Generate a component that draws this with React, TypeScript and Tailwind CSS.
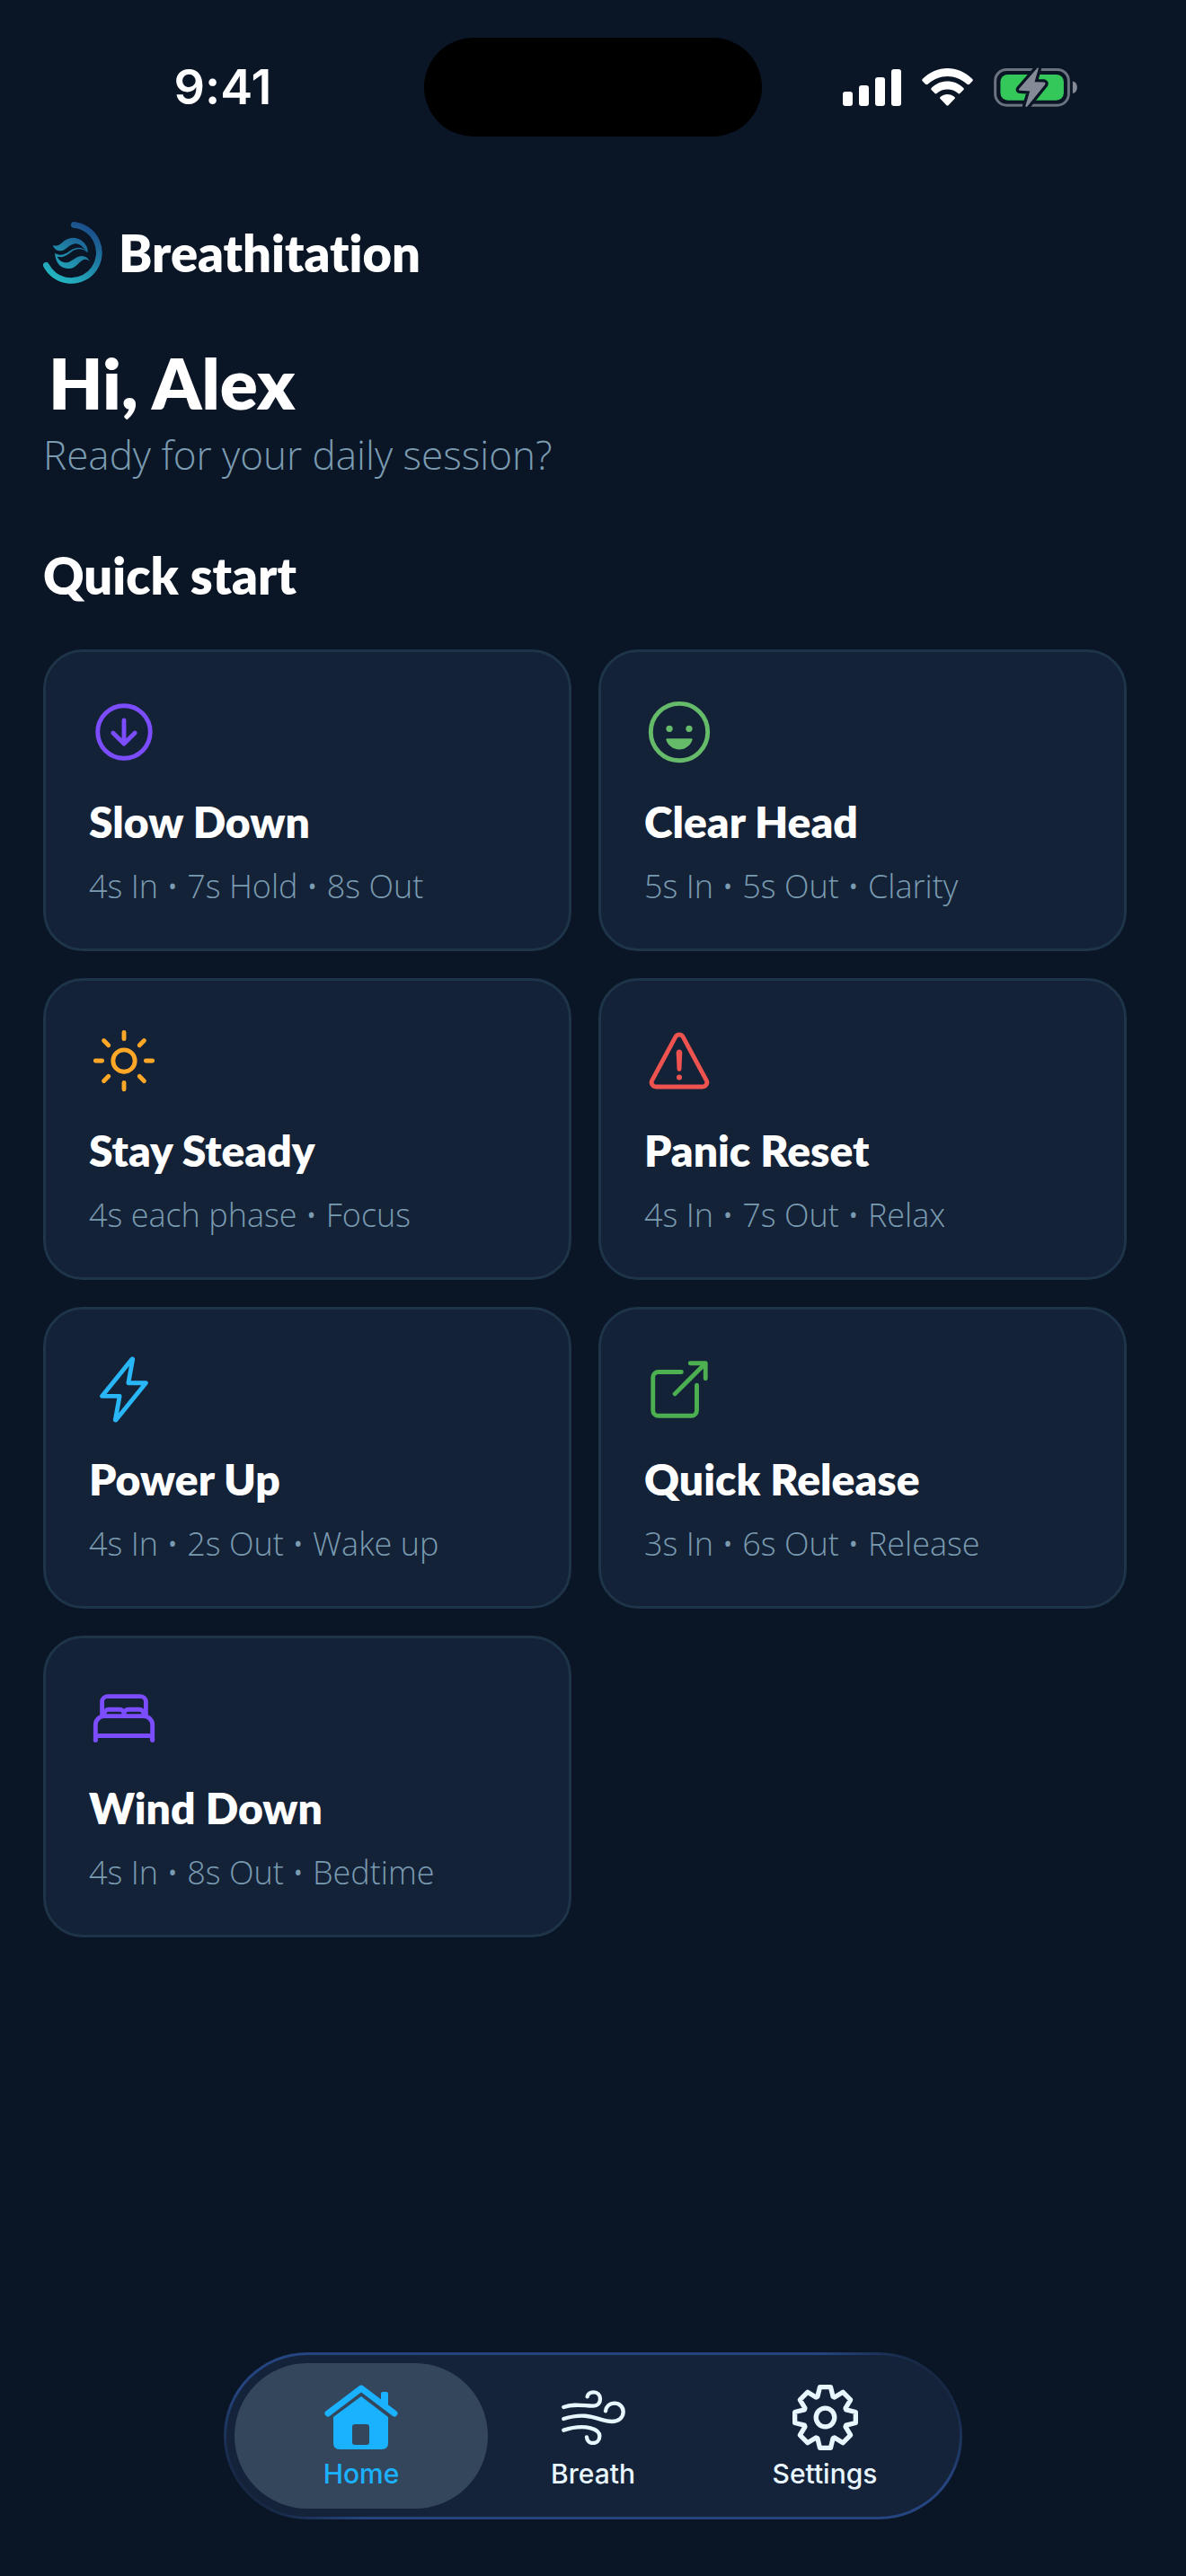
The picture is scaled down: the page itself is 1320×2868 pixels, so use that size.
import { useState } from 'react';
import type { IconType } from 'react-icons';
import {
  IoArrowDownCircleOutline,
  IoBedOutline,
  IoFlashOutline,
  IoHappyOutline,
  IoOpenOutline,
  IoSunnyOutline,
  IoWarningOutline,
} from 'react-icons/io5';

type Preset = { name: string; detail: string; icon: IconType; color: string };

const presets: Preset[] = [
  { name: 'Slow Down', detail: '4s In • 7s Hold • 8s Out', icon: IoArrowDownCircleOutline, color: 'text-[#7c4dff]' },
  { name: 'Clear Head', detail: '5s In • 5s Out • Clarity', icon: IoHappyOutline, color: 'text-[#66bb6a]' },
  { name: 'Stay Steady', detail: '4s each phase • Focus', icon: IoSunnyOutline, color: 'text-[#ffa726]' },
  { name: 'Panic Reset', detail: '4s In • 7s Out • Relax', icon: IoWarningOutline, color: 'text-[#ef5350]' },
  { name: 'Power Up', detail: '4s In • 2s Out • Wake up', icon: IoFlashOutline, color: 'text-[#29b6f6]' },
  { name: 'Quick Release', detail: '3s In • 6s Out • Release', icon: IoOpenOutline, color: 'text-[#4caf50]' },
  { name: 'Wind Down', detail: '4s In • 8s Out • Bedtime', icon: IoBedOutline, color: 'text-[#7c4dff]' },
];

function SignalIcon() {
  return (
    <svg viewBox="0 0 195 123" className="h-[41px] w-[65px]" fill="#fff" aria-hidden="true">
      <rect x="0" y="75" width="33" height="48" rx="9" />
      <rect x="54" y="54" width="33" height="69" rx="9" />
      <rect x="108" y="27" width="33" height="96" rx="9" />
      <rect x="162" y="0" width="33" height="123" rx="9" />
    </svg>
  );
}

function WifiIcon() {
  return (
    <svg viewBox="0 0 172 126" className="h-[42px] w-[57px]" fill="#fff" aria-hidden="true">
      <path d="M2 36C50-12 122-12 170 36Q173 40 170 43L160 53Q156 56 152 53C114 18 58 18 20 53Q16 56 12 53L2 43Q-1 40 2 36Z" />
      <path d="M32 66C62 36 110 36 140 66Q143 69 140 72L128 84Q125 87 122 84C102 66 70 66 50 84Q47 87 44 84L32 72Q29 69 32 66Z" />
      <path d="M62 96C76 84 96 84 110 96Q113 99 110 102L89 124Q86 127 83 124L62 102Q59 99 62 96Z" />
    </svg>
  );
}

function BatteryIcon() {
  const bolt = 'M146 2L85 72Q82 78 88 78L121 80L106 130Q108 136 113 131L172 58Q175 52 169 50L137 49L150 4Q149 -1 146 2Z';
  return (
    <svg viewBox="0 0 280 136" className="h-[45px] w-[93px]" aria-hidden="true">
      <rect x="4.5" y="7.5" width="247" height="120" rx="38" fill="none" stroke="#6c7380" strokeWidth="9" />
      <rect x="22" y="24" width="213" height="87" rx="25" fill="#34c759" />
      <path d="M265 47C275 49 280 57 280 67.500C280 78 275 86 265 88Z" fill="#858b96" />
      <path d={bolt} fill="#0a1526" stroke="#0a1526" strokeWidth="20" strokeLinejoin="round" />
      <path d={bolt} fill="#858b96" />
    </svg>
  );
}

function Logo() {
  return (
    <svg viewBox="0 0 198 207" className="h-[69px] w-[66px]" aria-hidden="true">
      <defs>
        <linearGradient id="logo" gradientUnits="userSpaceOnUse" x1="150" y1="20" x2="50" y2="195">
          <stop offset="0" stopColor="#1b4f8c" />
          <stop offset="1" stopColor="#24b5c1" />
        </linearGradient>
      </defs>
      <path d="M103 10A93.500 93.500 0 1 1 10 145" fill="none" stroke="url(#logo)" strokeWidth="20" strokeLinecap="round" />
      <g fill="url(#logo)">
        <path d="M33 78C52 84 58 74 70 64C88 50 114 50 130 64C145 76 150 90 149 103C138 90 124 71 106 73C84 76 76 97 58 97C46 97 36 90 33 78Z" />
        <path d="M39 104C42 140 60 156 86 156C112 156 118 132 136 126C146 124 152 128 156 132C148 116 134 110 118 116C102 122 92 136 74 136C60 134 52 126 47 116C70 122 84 108 96 99C114 86 132 88 149 103C134 82 112 82 94 94C78 105 62 118 39 104Z" />
      </g>
    </svg>
  );
}

function HomeIcon() {
  return (
    <svg viewBox="0 0 82 72" className="h-[72px] w-[82px]" aria-hidden="true">
      <path d="M4 32L41 4L78 32" fill="none" stroke="currentColor" strokeWidth="7" strokeLinecap="round" strokeLinejoin="round" />
      <path d="M63 18V10Q63 8 65 8H69Q71 8 71 10V26Z" fill="currentColor" />
      <path
        fillRule="evenodd"
        d="M41 13L71 36V65Q71 72 64 72H17Q10 72 10 65V36ZM34 44Q31 44 31 47V64Q31 67 34 67H47Q50 67 50 64V47Q50 44 47 44Z"
        fill="currentColor"
      />
    </svg>
  );
}

function BreathIcon() {
  return (
    <svg viewBox="0 0 213 183" className="h-[61px] w-[71px]" fill="none" stroke="currentColor" strokeWidth="13" strokeLinecap="round" aria-hidden="true">
      <path d="M7 57C40 44 70 52 104 53C122 53 129 42 129 30C129 16 120 7 107 7C96 7 88 13 86 22" />
      <path d="M7 96C70 76 105 90 130 98C150 104 160 105 168 105C190 105 206 92 206 73C206 56 193 44 177 44C160 44 149 55 147 70" />
      <path d="M7 134C50 120 80 123 97 127C118 132 127 142 127 154C127 167 118 177 105 177C93 177 85 169 84 157" />
    </svg>
  );
}

// one gear tooth, repeated every 45 degrees
const tooth = [[-26, -70], [-18, -102], [18, -102], [26, -70]];
const gear = Array.from({ length: 8 }, (_, i) => {
  const a = (i * Math.PI) / 4;
  return tooth
    .map(([x, y]) => `${(x * Math.cos(a) - y * Math.sin(a)).toFixed(1)},${(x * Math.sin(a) + y * Math.cos(a)).toFixed(1)}`)
    .join(' ');
}).join(' ');

function SettingsIcon() {
  return (
    <svg viewBox="-110 -110 220 220" className="h-[73px] w-[73px]" fill="none" stroke="currentColor" strokeWidth="16" strokeLinejoin="round" aria-hidden="true">
      <polygon points={gear} />
      <circle r="31" />
    </svg>
  );
}

const tabs = [
  { name: 'Home', icon: HomeIcon },
  { name: 'Breath', icon: BreathIcon },
  { name: 'Settings', icon: SettingsIcon },
];

export default function App() {
  const [tab, setTab] = useState('Home');

  return (
    <div className="flex min-h-screen flex-col bg-[#0a1526] font-['Lato',sans-serif] text-white [font-variant-ligatures:none]">
      {/* Status bar */}
      <div className="grid h-[194px] grid-cols-[1fr_376px_1fr] items-center">
        <div className="pl-6 text-center font-['Inter',sans-serif] text-[54px] font-semibold leading-none">9:41</div>
        <div className="h-[110px] rounded-full bg-black" />
        <div className="flex items-center justify-center gap-[23px] pr-8">
          <SignalIcon />
          <WifiIcon />
          <BatteryIcon />
        </div>
      </div>

      <main className="flex-1 pl-12 pr-[66px] pt-[53px]">
        <div className="flex items-center gap-[18px]">
          <Logo />
          <span className="text-[56px] font-extrabold leading-[69px]">Breathitation</span>
        </div>

        <h1 className="mt-[62px] pl-[6px] text-[78px] font-extrabold leading-[96px]">Hi, Alex</h1>
        <p className="mt-[2px] font-['Open_Sans',sans-serif] text-[44px] font-light leading-[60px] text-[#7a9bb0]">
          Ready for your daily session?
        </p>

        <h2 className="mt-[72px] text-[56px] font-extrabold leading-[66px]">Quick start</h2>

        <div className="mt-[49px] grid grid-cols-2 gap-[30px]">
          {presets.map(({ name, detail, icon: Icon, color }) => (
            <button
              key={name}
              type="button"
              className="flex h-[336px] flex-col items-start rounded-[44px] border-[3px] border-[#1e3448] bg-[#142238] px-12 pt-[50px] text-left"
            >
              <Icon className={`h-[78px] w-[78px] ${color}`} />
              <span className="mt-[31px] text-[48px] font-extrabold leading-[60px]">{name}</span>
              <span className="mt-[18px] font-['Open_Sans',sans-serif] text-[36px] font-light leading-[48px] text-[#7a9bb0]">
                {detail}
              </span>
            </button>
          ))}
        </div>
      </main>

      {/* Tab bar */}
      <div className="flex justify-center pb-[63px]">
        <nav className="rounded-full bg-[linear-gradient(45deg,#15233a_4%,#24457f_16%,#24457f_84%,#15233a_96%)] p-[3px]">
          <div className="flex rounded-full bg-[#15233a] px-[21px] py-[9px] font-['Inter',sans-serif]">
            {tabs.map(({ name, icon: Icon }) => (
              <button
                key={name}
                type="button"
                onClick={() => setTab(name)}
                className={`-mx-3 flex h-[162px] w-[282px] flex-col items-center rounded-full pt-[23px] ${
                  tab === name ? 'bg-[#34465c] text-[#1ab2ff]' : 'text-[#e8f6ff]'
                }`}
              >
                <span className="flex h-[74px] items-center">
                  <Icon />
                </span>
                <span className="mt-[6px] text-[30px] font-medium leading-[40px]">{name}</span>
              </button>
            ))}
          </div>
        </nav>
      </div>
    </div>
  );
}
